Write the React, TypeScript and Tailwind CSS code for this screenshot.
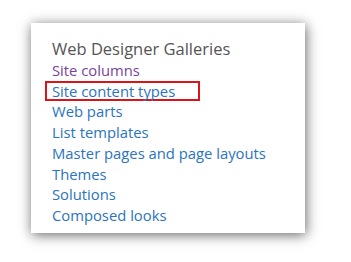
export default function App() {
  const links = [
    "Web parts",
    "List templates",
    "Master pages and page layouts",
    "Themes",
    "Solutions",
    "Composed looks",
  ];
  return (
    <div
      className="w-[351px] h-[262px] bg-white pl-[31px] pt-[23px]"
      style={{ fontFamily: '"Open Sans", "Noto Sans", sans-serif' }}
    >
      <div className="w-[274px] h-[210px] bg-white shadow-[1px_2px_12px_rgba(0,0,0,0.6)] pl-[21px] pt-[15px]">
        <div className="text-[16.5px] leading-[22px] text-[#555555]">Web Designer Galleries</div>
        <div className="flex flex-col items-start text-[14.8px] leading-[20.7px] text-[#2a74c0]">
          <span className="text-[#7b3f9e]">Site columns</span>
          <span className="-ml-[7px] pl-[5px] w-[155px] border-2 border-[#d9141b] leading-[16.7px]">Site content types</span>
          {links.map((l) => (
            <span key={l}>{l}</span>
          ))}
        </div>
      </div>
    </div>
  );
}
